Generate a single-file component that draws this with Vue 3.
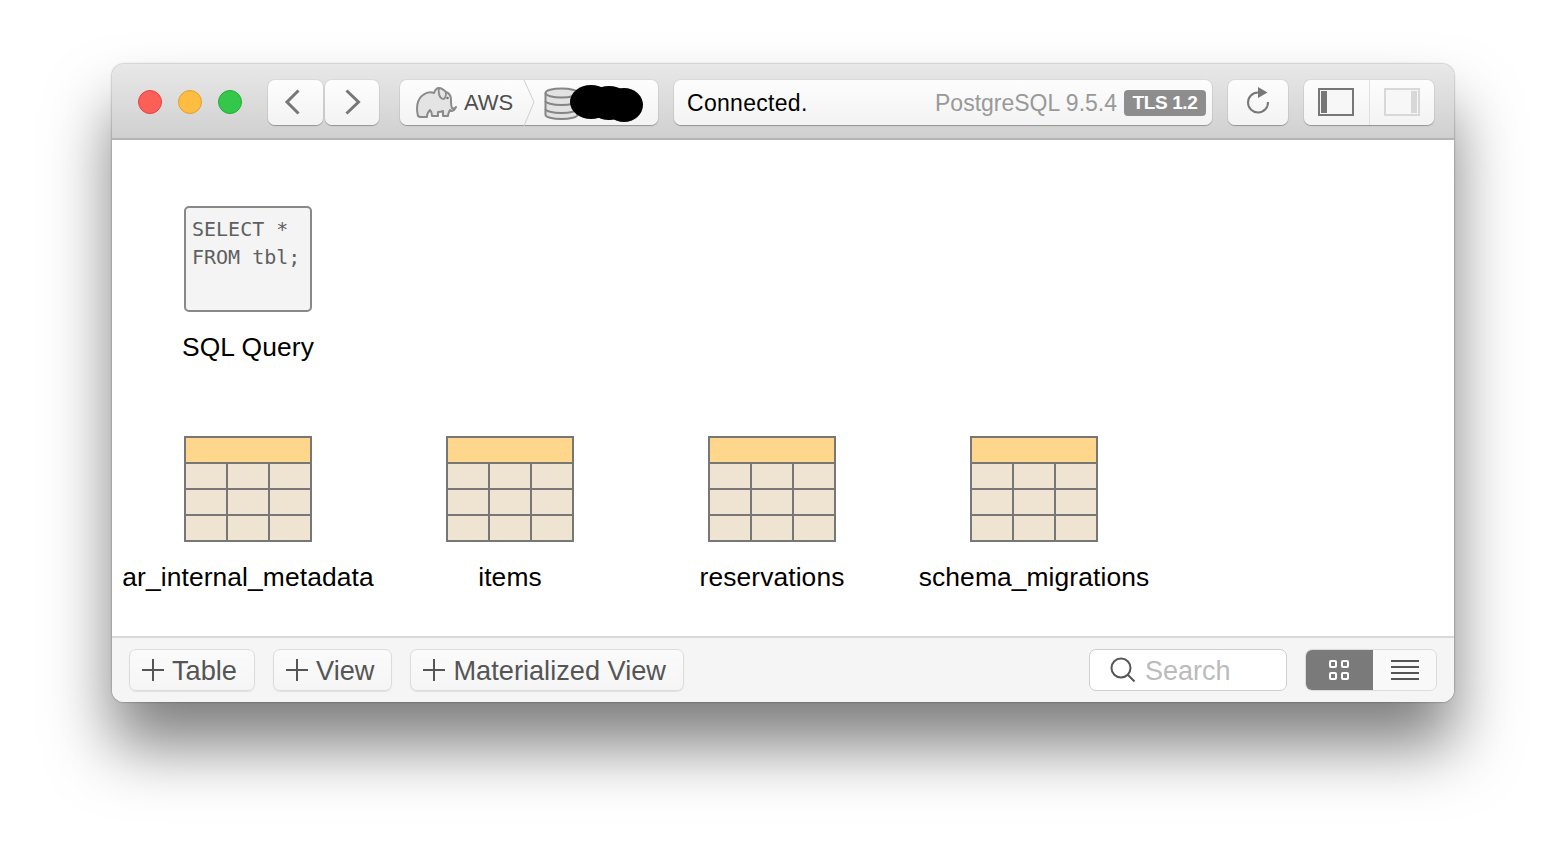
<script setup>
const tables = ['ar_internal_metadata', 'items', 'reservations', 'schema_migrations']
</script>

<template>
  <div class="page">
    <div class="window">
      <header class="titlebar">
        <div class="lights">
          <span class="light red"></span>
          <span class="light yellow"></span>
          <span class="light green"></span>
        </div>
        <div class="nav">
          <button class="btn back">
            <svg width="20" height="28" viewBox="0 0 20 28"><path d="M14.500 2.500 3 14l11.500 11.500" fill="none" stroke="#777" stroke-width="3"/></svg>
          </button>
          <button class="btn forward">
            <svg width="20" height="28" viewBox="0 0 20 28"><path d="M4.500 2.500 16.500 14 4.500 25.500" fill="none" stroke="#777" stroke-width="3"/></svg>
          </button>
        </div>
        <div class="crumbs">
          <svg class="elephant" width="42" height="34" viewBox="0 0 42 34">
            <path d="M2 30C0 22 1 13 7 9c4-3 8-3 11-2 1-3 3-5 5-5 3 0 5 2 7 4 3 1 5 4 5 8 0 3 0 6 1 8 1 1 3 0 4-1-1 3-3 4-5 4l-1-1c-1 2-2 3-2 6h-5v-5c-2 1-3 1-5 1v4h-6c0-3-1-5-2-6-2 2-3 4-3 7H4z" fill="#e4e4e4" stroke="#8a8a8a" stroke-width="2" stroke-linejoin="round"/>
            <path d="M23 2c-1 4 0 10 4 11 2 0 3-3 3-7" fill="none" stroke="#8a8a8a" stroke-width="1.800"/>
            <circle cx="31.500" cy="12" r="1.300" fill="#777"/>
          </svg>
          <span class="aws">AWS</span>
          <svg class="chevron" width="12" height="46" viewBox="0 0 12 46"><path d="M1 0 11 22 1 46" fill="none" stroke="#cfcfcf" stroke-width="1"/></svg>
          <svg class="db" width="36" height="34" viewBox="0 0 36 34">
            <g fill="#e2e2e2" stroke="#858585" stroke-width="2">
              <path d="M1.500 6v22c0 2 7 4 16 4s16-2 16-4V6"/>
              <ellipse cx="17.500" cy="6" rx="16" ry="4.500"/>
              <path d="M1.500 14c0 2 7 4 16 4s16-2 16-4M1.500 22c0 2 7 4 16 4s16-2 16-4" fill="none"/>
            </g>
          </svg>
          <div class="scribble">
            <span class="blob b1"></span>
            <span class="blob b2"></span>
            <span class="blob b3"></span>
          </div>
        </div>
        <div class="status">
          <span class="connected">Connected.</span>
          <span class="version">PostgreSQL 9.5.4</span>
          <span class="tls">TLS 1.2</span>
        </div>
        <button class="btn reload">
          <svg width="26" height="30" viewBox="0 0 26 30">
            <path d="M13 6.500A10 10 0 1 0 23 16" fill="none" stroke="#777" stroke-width="2"/>
            <path d="M13 1 22.500 6.500 13 12z" fill="#777"/>
          </svg>
        </button>
        <div class="btn panels">
          <span class="panel-cell first">
            <svg width="36" height="28" viewBox="0 0 36 28"><rect x="1" y="1" width="34" height="26" fill="#f7f7f7" stroke="#777" stroke-width="2"/><rect x="3" y="3" width="6" height="22" fill="#777"/></svg>
          </span>
          <span class="panel-cell">
            <svg width="36" height="28" viewBox="0 0 36 28"><rect x="1" y="1" width="34" height="26" fill="#f7f7f7" stroke="#d8d8d8" stroke-width="2"/><rect x="27" y="3" width="6" height="22" fill="#d8d8d8"/></svg>
          </span>
        </div>
      </header>

      <main class="content">
        <div class="grid">
          <div class="item">
            <div class="query-icon">SELECT *<br>FROM tbl;</div>
            <div class="label">SQL Query</div>
          </div>
        </div>
        <div class="grid second">
          <div v-for="t in tables" :key="t" class="item">
            <div class="table-icon">
              <div class="table-head"></div>
              <div class="table-body">
                <span v-for="n in 9" :key="n" class="cell"></span>
              </div>
            </div>
            <div class="label">{{ t }}</div>
          </div>
        </div>
      </main>

      <footer class="footer">
        <button class="add"><svg class="plus" width="22" height="22" viewBox="0 0 22 22"><path d="M0 11h22M11 0v22" stroke="#555" stroke-width="2"/></svg>Table</button>
        <button class="add"><svg class="plus" width="22" height="22" viewBox="0 0 22 22"><path d="M0 11h22M11 0v22" stroke="#555" stroke-width="2"/></svg>View</button>
        <button class="add"><svg class="plus" width="22" height="22" viewBox="0 0 22 22"><path d="M0 11h22M11 0v22" stroke="#555" stroke-width="2"/></svg>Materialized View</button>
        <div class="search">
          <svg class="glass" width="26" height="26" viewBox="0 0 26 26"><circle cx="11" cy="11" r="9.500" fill="none" stroke="#555" stroke-width="2"/><path d="m17.500 17.500 7 7" stroke="#555" stroke-width="2"/></svg>
          <span>Search</span>
        </div>
        <div class="toggle">
          <span class="toggle-cell active">
            <svg width="20" height="20" viewBox="0 0 20 20" fill="none" stroke="#fff" stroke-width="2"><rect x="1" y="1" width="6" height="6" rx="1"/><rect x="13" y="1" width="6" height="6" rx="1"/><rect x="1" y="13" width="6" height="6" rx="1"/><rect x="13" y="13" width="6" height="6" rx="1"/></svg>
          </span>
          <span class="toggle-cell">
            <svg width="28" height="20" viewBox="0 0 28 20"><path d="M0 1h28M0 7h28M0 13h28M0 19h28" stroke="#555" stroke-width="2"/></svg>
          </span>
        </div>
      </footer>
    </div>
  </div>
</template>

<style>
html, body { background: #fff; overflow: hidden; }
</style>

<style scoped>
.page {
  width: 1566px;
  height: 862px;
  box-sizing: border-box;
  padding: 64px 112px;
  background: #fff;
  font-family: "Liberation Sans", Arial, sans-serif;
}
.window {
  width: 1342px;
  height: 638px;
  display: flex;
  flex-direction: column;
  background: #fff;
  border-radius: 12px;
  overflow: hidden;
  box-shadow: 0 0 2px rgba(0,0,0,.5), 0 44px 64px rgba(0,0,0,.5);
}
.titlebar {
  height: 76px;
  box-sizing: border-box;
  flex: none;
  display: flex;
  align-items: center;
  padding: 2px 20px 0 26px;
  background: linear-gradient(#e9e8e9, #d1d0d1);
  border-bottom: 2px solid #b5b5b5;
}
.lights { display: flex; gap: 16px; margin-right: 26px; }
.light { width: 24px; height: 24px; border-radius: 50%; box-sizing: border-box; border: 1px solid; }
.red { background: #fc5f58; border-color: #e0443e; }
.yellow { background: #fdbd41; border-color: #dea034; }
.green { background: #34c84a; border-color: #27aa35; }
.btn {
  display: flex;
  align-items: center;
  justify-content: center;
  height: 45px;
  box-sizing: border-box;
  padding: 0;
  border: none;
  border-radius: 7px;
  background: linear-gradient(#fdfdfd, #f3f3f3);
  box-shadow: 0 1px 1px rgba(0,0,0,.28), 0 0 0 1px rgba(0,0,0,.04);
}
.nav { display: flex; gap: 2px; margin-right: 21px; }
.back { width: 55px; }
.back svg { margin-right: 4px; }
.forward { width: 54px; }
.crumbs {
  position: relative;
  width: 258px;
  height: 45px;
  margin: 1px 16px 0 0;
  display: flex;
  align-items: center;
  border-radius: 7px;
  background: linear-gradient(#fdfdfd, #f3f3f3);
  box-shadow: 0 1px 1px rgba(0,0,0,.28), 0 0 0 1px rgba(0,0,0,.04);
}
.elephant { margin-left: 16px; }
.aws { margin-left: 6px; font-size: 22px; color: #4f4f4f; width: 49px; }
.chevron { margin-left: 10px; flex: none; }
.db { margin-top: 2px; margin-left: 9px; }
.scribble { position: absolute; left: 170px; top: 5px; width: 74px; height: 38px; }
.blob { position: absolute; background: #000; border-radius: 50%; }
.b1 { left: 0; top: 0; width: 42px; height: 34px; }
.b2 { left: 18px; top: 1px; width: 42px; height: 34px; }
.b3 { left: 35px; top: 3px; width: 38px; height: 34px; }
.status {
  width: 538px;
  height: 45px;
  box-sizing: border-box;
  margin: 1px 16px 0 0;
  padding: 2px 6px 0 13px;
  display: flex;
  align-items: center;
  border-radius: 7px;
  background: linear-gradient(#fdfdfd, #f3f3f3);
  box-shadow: 0 1px 1px rgba(0,0,0,.28), 0 0 0 1px rgba(0,0,0,.04);
}
.connected { font-size: 23px; color: #000; flex: 1; letter-spacing: .3px; }
.version { font-size: 23px; color: #999; margin-right: 7px; }
.tls {
  width: 82px;
  height: 26px;
  line-height: 26px;
  margin-top: -2px;
  text-align: center;
  border-radius: 4px;
  background: #8d8d8d;
  color: #fff;
  font-size: 19px;
  font-weight: 700;
  letter-spacing: -.4px;
}
.reload { width: 60px; margin-right: 16px; }
.reload svg { margin: -3px 0 0 -1px; }
.panels { width: 130px; }
.panel-cell { flex: 1; height: 100%; display: flex; align-items: center; justify-content: center; }
.panel-cell.first { border-right: 1px solid #e0e0e0; }
.content {
  flex: 1;
  min-height: 0;
  box-sizing: border-box;
  padding: 66px 0 0 5px;
}
.grid { display: flex; height: 230px; }
.grid.second { height: auto; }
.item { width: 262px; display: flex; flex-direction: column; align-items: center; }
.query-icon {
  width: 128px;
  height: 106px;
  box-sizing: border-box;
  padding: 7px 6px;
  border: 2px solid #888;
  border-radius: 5px;
  background: #f4f4f4;
  font-family: "DejaVu Sans Mono", monospace;
  font-size: 20px;
  line-height: 28px;
  color: #5f5f5f;
  white-space: nowrap;
}
.label { margin-top: 19px; font-size: 26.4px; letter-spacing: .1px; line-height: 32px; color: #000; white-space: nowrap; }
.table-icon {
  width: 128px;
  height: 106px;
  box-sizing: border-box;
  border: 2px solid #777;
  background: #777;
  display: flex;
  flex-direction: column;
  gap: 2px;
}
.table-head { height: 24px; background: #fed78d; flex: none; }
.table-body { flex: 1; display: grid; grid-template-columns: 1fr 1fr 1fr; grid-template-rows: 1fr 1fr 1fr; gap: 2px; }
.cell { background: #efe4d1; }
.footer {
  height: 66px;
  flex: none;
  box-sizing: border-box;
  display: flex;
  align-items: center;
  padding: 0 17px 0 17px;
  border-top: 2px solid #d9d9d9;
  background: #f5f5f5;
}
.add {
  display: flex;
  align-items: center;
  height: 42px;
  box-sizing: border-box;
  margin-right: 18px;
  padding: 2px 17px 0 12px;
  border: 1px solid #dcdcdc;
  border-radius: 7px;
  background: linear-gradient(#fbfbfb, #f5f5f5);
  box-shadow: 0 1px 1px rgba(0,0,0,.08);
  font-family: inherit;
  font-size: 27.2px;
  color: #555;
}
.plus { margin: -2px 8px 0 0; }
.search {
  margin-left: auto;
  margin-right: 18px;
  width: 198px;
  height: 42px;
  box-sizing: border-box;
  display: flex;
  align-items: center;
  gap: 9px;
  padding: 2px 0 0 20px;
  border: 1px solid #cfcfcf;
  border-radius: 7px;
  background: #fff;
  font-size: 27px;
  color: #bbb;
}
.glass { margin-top: -2px; }
.toggle {
  width: 132px;
  height: 42px;
  box-sizing: border-box;
  display: flex;
  border: 1px solid #dcdcdc;
  border-radius: 7px;
  overflow: hidden;
  background: #f9f9f9;
}
.toggle-cell { flex: 1; display: flex; align-items: center; justify-content: center; }
.toggle-cell.active { flex: none; width: 68px; margin: -1px 0 -1px -1px; background: #7a7a7a; }
</style>
